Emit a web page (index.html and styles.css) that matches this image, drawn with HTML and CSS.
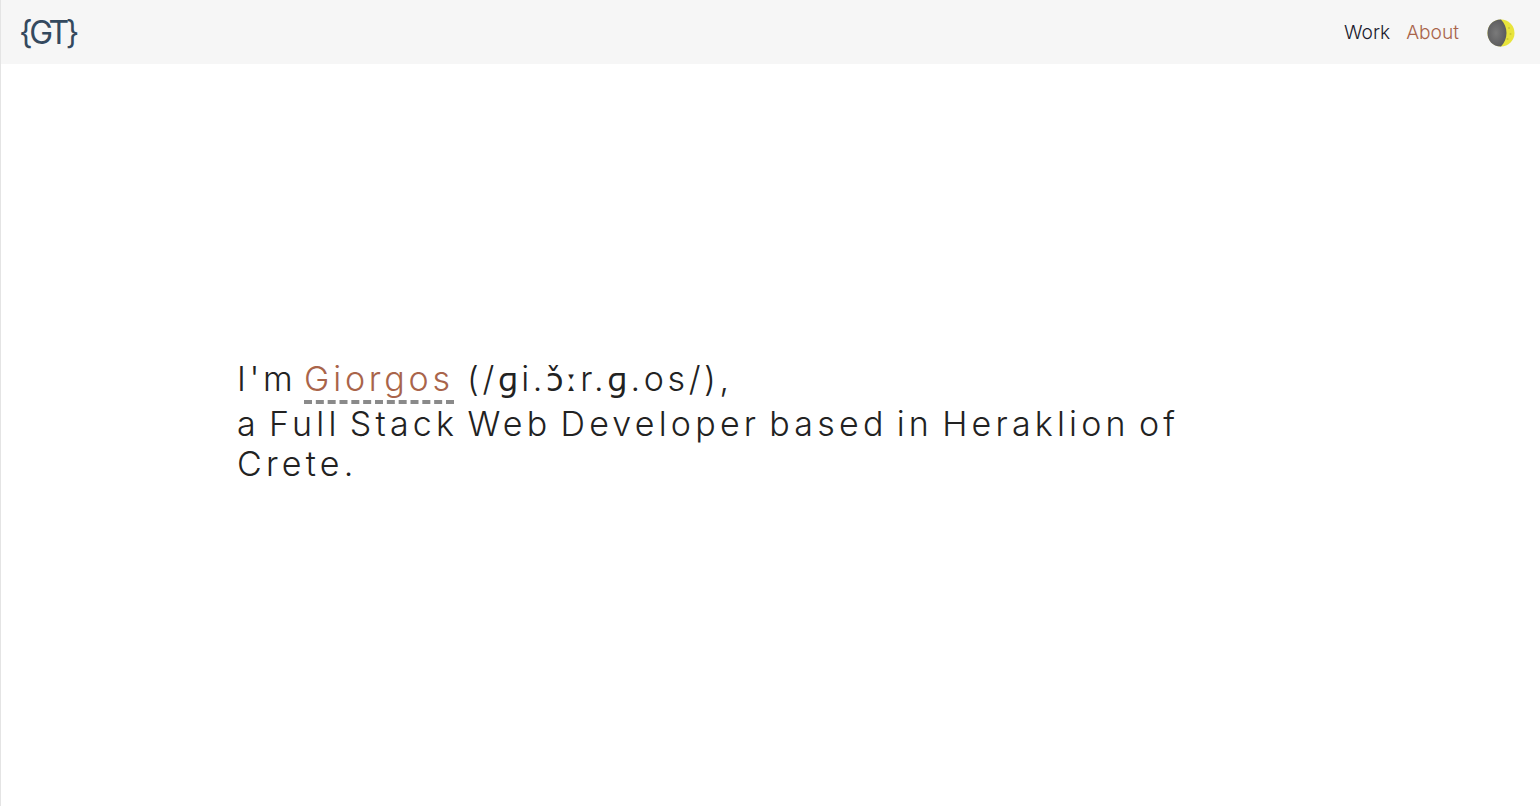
FILE: index.html
```html
<!DOCTYPE html>
<html>
<head>
<title>Giorgos</title>
<link rel="stylesheet" href="styles.css">
</head>
<body>
	<div class="navbar">
		<a class="logo" href="#">{GT}</a>
		<div class="links">
			<a class="link" href="#">Work</a>
			<a class="link active" href="#">About</a>
			<svg class="moon" width="30" height="30" viewBox="0 0 30 30">
				<defs>
					<radialGradient id="dark" cx="45%" cy="50%" r="60%">
						<stop offset="0%" stop-color="#7a7a7a"/>
						<stop offset="100%" stop-color="#58585a"/>
					</radialGradient>
				</defs>
				<circle cx="15" cy="15" r="13.5" fill="#e8e43c"/>
				<path d="M15 1.5C6 1.5 1.5 8 1.5 15S6 28.5 15 28.5C18.5 25 20.5 20 20.5 15S18.5 5 15 1.5Z" fill="url(#dark)"/>
				<circle cx="23" cy="10" r="1" fill="#cbc72f"/>
				<circle cx="24.5" cy="16" r="1" fill="#cbc72f"/>
				<circle cx="21.5" cy="21" r="1" fill="#cbc72f"/>
			</svg>
		</div>
	</div>
	<div class="content">
		<p class="intro"><span class="first">I'm <a class="name" href="#">Giorgos</a> (/<span class="ipa">ɡ</span>i.<span class="ipa">ɔ̌ː</span>r.<span class="ipa">ɡ</span>.os/),</span>a Full Stack Web Developer based in Heraklion of Crete.</p>
	</div>
</body>
</html>
```
FILE: styles.css
```css
* {
  margin: 0;
  padding: 0;
  box-sizing: border-box;
}

html, body {
  height: 100%;
}

body {
  font-family: "Inter", "Noto Sans", sans-serif;
  background: #fff;
  border-left: 1px solid #e4e4e4;
  height: 806px;
  overflow: hidden;
}

a {
  text-decoration: none;
}

.navbar {
  height: 64px;
  background: #f6f6f6;
  display: flex;
  justify-content: space-between;
  align-items: center;
  padding: 0 24px 0 18px;
}

.logo {
  font-size: 32px;
  letter-spacing: -3.5px;
  color: #34495e;
  font-weight: 400;
}

.links {
  display: flex;
  align-items: center;
}

.link {
  font-size: 19.2px;
  font-weight: 300;
  color: #1a1a2e;
  margin-right: 16px;
}

.link.active {
  color: #a9644a;
  margin-right: 27px;
}

.moon {
  display: block;
  margin-top: 1px;
}

.content {
  height: 742px;
  display: flex;
  align-items: center;
  padding: 0 350px 27px 236px;
}

.intro {
  font-size: 34px;
  font-weight: 300;
  line-height: 40px;
  letter-spacing: 4.2px;
  word-spacing: -4.6px;
  color: #222;
}

.first {
  display: block;
  margin-bottom: 4px;
  letter-spacing: 3.6px;
  word-spacing: 0;
}

.name {
  color: #a9644a;
  letter-spacing: 3.8px;
  margin-left: -5.4px;
  padding-bottom: 1px;
  border-bottom: 4px dashed #8a8a8a;
}

.ipa {
  font-family: "DejaVu Sans", sans-serif;
  font-weight: 400;
  font-size: 32px;
  letter-spacing: 3px;
}
```
